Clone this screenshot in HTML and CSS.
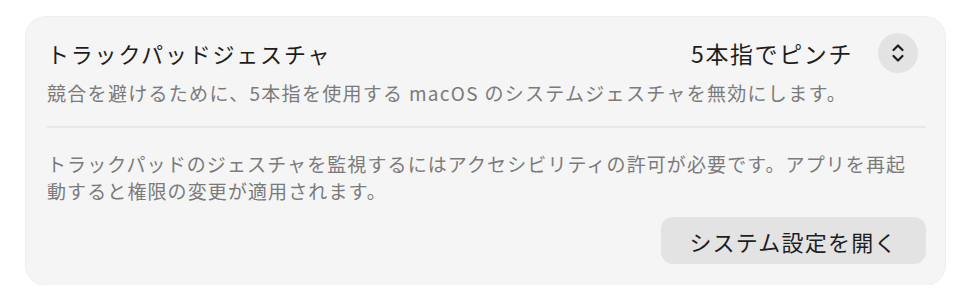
FILE: index.html
```html
<!DOCTYPE html>
<html lang="ja">
<head>
<meta charset="UTF-8">
<title>トラックパッドジェスチャ</title>
<link rel="stylesheet" href="styles.css">
</head>
<body>
<div class="card">
    <div class="row">
        <div class="title">トラックパッドジェスチャ</div>
        <div class="picker">
            <span class="picker-value">5本指でピンチ</span>
            <span class="stepper">
                <svg width="14" height="22" viewBox="0 0 14 22">
                    <path d="M2.5 8 L7 3.5 L11.5 8 M2.5 14 L7 18.5 L11.5 14" fill="none" stroke="#1c1c1c" stroke-width="2.2" stroke-linecap="round" stroke-linejoin="round"/>
                </svg>
            </span>
        </div>
    </div>
    <div class="sub">競合を避けるために、5本指を使用する macOS のシステムジェスチャを無効にします。</div>
    <div class="divider"></div>
    <div class="note">トラックパッドのジェスチャを監視するにはアクセシビリティの許可が必要です。アプリを再起動すると権限の変更が適用されます。</div>
    <div class="actions">
        <button class="btn">システム設定を開く</button>
    </div>
</div>
</body>
</html>
```

FILE: styles.css
```css
body {
    margin: 0;
    background: #ffffff;
    font-family: "Noto Sans CJK JP", "Noto Sans", sans-serif;
}

.card {
    margin: 17px 0 0 26px;
    width: 919px;
    height: 268px;
    box-sizing: border-box;
    padding: 16px 19px 0 21px;
    background: #f5f5f5;
    border-radius: 20px;
    box-shadow: 0 0 0 1px #efefef;
}

.row {
    display: flex;
    justify-content: space-between;
    align-items: center;
    height: 40px;
}

.title {
    font-size: 22px;
    letter-spacing: 1.8px;
    color: #1e1e1e;
}

.picker {
    display: flex;
    align-items: center;
    gap: 25px;
    margin-right: 8px;
}

.picker-value {
    font-size: 23px;
    letter-spacing: 1.6px;
    color: #1e1e1e;
}

.stepper {
    width: 40px;
    height: 40px;
    border-radius: 50%;
    background: #e3e3e3;
    display: flex;
    align-items: center;
    justify-content: center;
}

.sub {
    margin-top: 6px;
    font-size: 19px;
    line-height: 28px;
    letter-spacing: 1.3px;
    color: #7b7b7b;
}

.divider {
    margin-top: 19px;
    height: 2px;
    background: #e8e8e8;
}

.note {
    margin-top: 22px;
    font-size: 19px;
    line-height: 27px;
    letter-spacing: 1.1px;
    color: #7b7b7b;
}

.actions {
    display: flex;
    justify-content: flex-end;
    margin-top: 13px;
}

.btn {
    width: 265px;
    height: 47px;
    border: none;
    border-radius: 12px;
    background: #e3e3e3;
    font-family: "Noto Sans CJK JP", "Noto Sans", sans-serif;
    font-size: 22px;
    letter-spacing: 1.2px;
    color: #1e1e1e;
}
```
